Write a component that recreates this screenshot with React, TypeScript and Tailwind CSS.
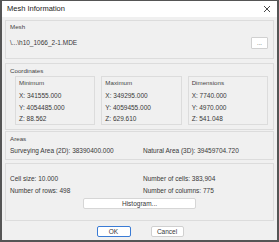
import React from 'react';

const font = { fontFamily: '"Liberation Sans", Arial, sans-serif' };

function Group({ label, className = '', children }: { label: string; className?: string; children?: React.ReactNode }) {
  return (
    <div className={`border border-[#dcdcdc] px-[4px] ${className}`}>
      <div className="h-[10px] leading-[10px] text-[6.2px] text-[#444]">{label}</div>
      {children}
    </div>
  );
}

function Extent({ label, x, y, z }: { label: string; x: string; y: string; z: string }) {
  return (
    <div className="flex-1 border border-[#dcdcdc] px-[3px] pt-[1px] h-[49px]">
      <div className="h-[10px] leading-[10px] text-[6.2px] text-[#444]">{label}</div>
      <div className="mt-[2px] h-[11.5px] leading-[11.5px]">X: {x}</div>
      <div className="h-[11.5px] leading-[11.5px]">Y: {y}</div>
      <div className="h-[11.5px] leading-[11.5px]">Z: {z}</div>
    </div>
  );
}

export default function App() {
  return (
    <div
      className="w-[279px] h-[242px] flex flex-col bg-[#f0f0f0] border-l-2 border-r-2 border-b-2 border-t border-[#555] text-[6.5px] text-[#383838] overflow-hidden"
      style={font}
    >
      {/* Title bar */}
      <div className="h-[16px] bg-white flex items-center justify-between pl-[5px] pr-[6px] shrink-0">
        <span className="text-[7.5px] text-[#222]">Mesh Information</span>
        <svg width="8" height="8" viewBox="0 0 8 8" className="text-[#333]">
          <path d="M1 1 L7 7 M7 1 L1 7" stroke="currentColor" strokeWidth="0.9" />
        </svg>
      </div>

      <div className="flex-1 flex flex-col px-[3px] pt-[3px]">
        {/* Mesh */}
        <Group label="Mesh" className="h-[39px] pt-[1px]">
          <div className="flex items-center justify-between mt-[5px]">
            <span>\...\h10_1066_2-1.MDE</span>
            <div className="w-[17px] h-[12px] bg-white border border-[#d0d0d0] rounded-[1px] flex items-center justify-center text-[6px] leading-none mr-[1px]">
              ...
            </div>
          </div>
        </Group>

        {/* Coordinates */}
        <Group label="Coordinates" className="mt-[4px] h-[67px] pt-[2px]">
          <div className="flex gap-[6px] pl-[5px] pr-[1px]">
            <Extent label="Minimum" x="341555.000" y="4054485.000" z="88.562" />
            <Extent label="Maximum" x="349295.000" y="4059455.000" z="629.610" />
            <Extent label="Dimensions" x="7740.000" y="4970.000" z="541.048" />
          </div>
        </Group>

        {/* Areas */}
        <Group label="Areas" className="mt-[1px] h-[29px] pt-[2px]">
          <div className="flex mt-[2px]">
            <span className="w-[133px]">Surveying Area (2D): 38390400.000</span>
            <span>Natural Area (3D): 39459704.720</span>
          </div>
        </Group>

        {/* Grid info */}
        <div className="mt-[3px] border border-[#dcdcdc] px-[4px] pt-[9px] h-[58px] flex flex-col">
          <div className="flex h-[12px] leading-[12px]">
            <span className="w-[133px]">Cell size: 10.000</span>
            <span>Number of cells: 383,904</span>
          </div>
          <div className="flex h-[12px] leading-[12px]">
            <span className="w-[133px]">Number of rows: 498</span>
            <span>Number of columns: 775</span>
          </div>
          <div className="flex justify-center mt-[1px]">
            <div className="w-[113px] h-[11px] bg-white border border-[#d6d6d6] rounded-[2px] flex items-center justify-center">
              Histogram...
            </div>
          </div>
        </div>

        {/* Buttons */}
        <div className="flex justify-center gap-[20px] mt-[5px] pl-[1px]">
          <div className="w-[34px] h-[11px] bg-white border border-[#3a7bd5] rounded-[2px] flex items-center justify-center">
            OK
          </div>
          <div className="w-[33px] h-[11px] bg-white border border-[#d0d0d0] rounded-[2px] flex items-center justify-center">
            Cancel
          </div>
        </div>
      </div>
    </div>
  );
}
